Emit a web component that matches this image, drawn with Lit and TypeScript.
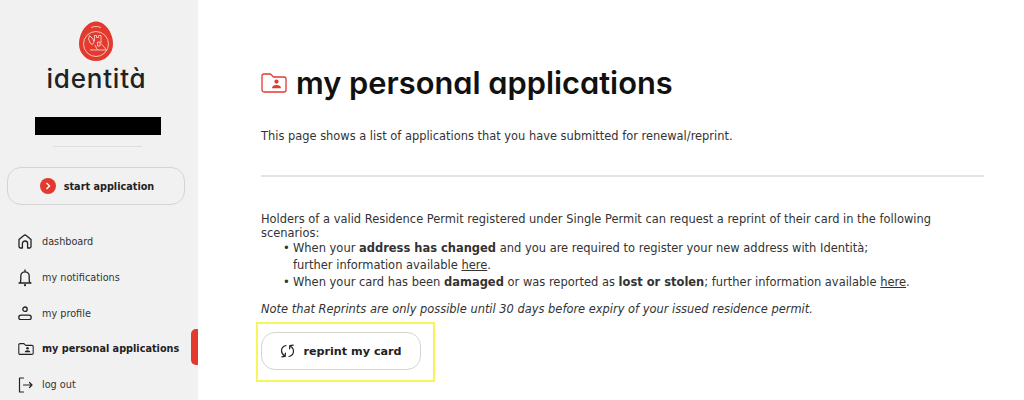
import { LitElement, html, css, svg } from "lit";
import { customElement } from "lit/decorators.js";

const folder = (c: string, w: number, h: number, sw = 1.3) => html`<svg width=${w} height=${h} viewBox="0 0 26 20" fill="none" stroke=${c} stroke-width=${sw} stroke-linejoin="round">
  <path d="M1 3a2 2 0 0 1 2-2h6.500l3 3H23a2 2 0 0 1 2 2V17a2 2 0 0 1-2 2H3a2 2 0 0 1-2-2Z" />
  <circle cx="15.500" cy="8.600" r="2.100" fill=${c} stroke="none" />
  <path d="M11 15.300c0-2 2-3.200 4.500-3.200s4.500 1.200 4.500 3.200Z" fill=${c} stroke="none" />
</svg>`;

const icons: Record<string, unknown> = {
  home: html`<svg width="14" height="15" viewBox="0 0 14 15" fill="none" stroke="#222" stroke-width="1.300" stroke-linejoin="round"><path d="M1 5.600 5.800 1.500a1.800 1.800 0 0 1 2.400 0L13 5.600V12.500a1.500 1.500 0 0 1-1.500 1.500H9.600V9.600a2.600 2.600 0 0 0-5.200 0V14H2.500A1.500 1.500 0 0 1 1 12.500Z"/></svg>`,
  bell: html`<svg width="14" height="18" viewBox="0 0 14 18" fill="none" stroke="#222" stroke-width="1.300" stroke-linecap="round"><path d="M7 1v1.400M1 14h12M2 14c.6-1 .8-2.200.8-3.500V7a4.200 4.200 0 0 1 8.400 0v3.500c0 1.300.2 2.500.8 3.500"/><circle cx="7" cy="16.200" r="1.100" fill="#222" stroke="none"/></svg>`,
  user: html`<svg width="14" height="14" viewBox="0 0 14 14" fill="none" stroke="#222" stroke-width="1.300"><circle cx="7" cy="3.200" r="2.200"/><path d="M3 9.200h8a2.200 2.200 0 0 1 0 4.400H3a2.200 2.200 0 0 1 0-4.400Z"/></svg>`,
  folder: folder("#222", 16, 12, 1.800),
  logout: html`<svg width="15" height="16" viewBox="0 0 15 16" fill="none" stroke="#222" stroke-width="1.200" stroke-linecap="round" stroke-linejoin="round"><path d="M5.500 1H1.500v14h4M5.500 8h8.500M11.500 5.500 14 8l-2.500 2.500"/></svg>`,
};

const nav = [
  { icon: "home", label: "dashboard" },
  { icon: "bell", label: "my notifications" },
  { icon: "user", label: "my profile" },
  { icon: "folder", label: "my personal applications", active: true },
  { icon: "logout", label: "log out" },
];

const mark = svg`
  <path d="M17 .5C25.500.5 34 11 34 23 34 32.500 26.500 40 17 40 7.500 40 0 32.500 0 23 0 11 8.500.5 17 .5Z" fill="#e23a2e"/>
  <g fill="none" stroke="#f8d0ca" stroke-width=".9">
    <circle cx="17" cy="23" r="12.500"/>
    <path d="M12 6.500c3.200-1.300 6.800-1.300 10 0"/>
    <path d="M10.500 14.500l3.500 3.500 1 3-1.500 2.500-2-1-2-4.500ZM15.500 20v-5.500h2v2h2v-2h2.500v8M18.500 25v-4h2.500v4ZM11 29h7.500l-2.500-5M18.500 29h9l-5-6"/>
  </g>`;

@customElement("app-root")
export class AppRoot extends LitElement {
  static styles = css`
    :host {
      display: flex;
      width: 1024px;
      height: 400px;
      overflow: hidden;
      background: #fff;
      font-family: "DejaVu Sans", Verdana, sans-serif;
      color: #222;
    }
    .side {
      width: 198px;
      height: 400px;
      flex: none;
      background: #f1f1f1;
      display: flex;
      flex-direction: column;
      align-items: center;
      padding-top: 21px;
      box-sizing: border-box;
      overflow: hidden;
    }
    .side > * { flex: none; }
    .mark { display: block; margin-left: -6px; }
    .brand {
      font-family: "Inter", sans-serif;
      font-feature-settings: "cv11";
      font-size: 26px;
      font-weight: 500;
      line-height: 28px;
      letter-spacing: 0.8px;
      color: #222;
      margin: 4px 0 0 -5px;
    }
    .redact { width: 126px; height: 18px; background: #000; margin: 24px 0 0 -2px; }
    .rule { width: 89px; height: 1px; background: #dedede; margin: 11px 0 0 -4px; }
    .start {
      width: 178px;
      height: 38px;
      box-sizing: border-box;
      margin: 20px 0 0 -6px;
      border: 1px solid #d4d4d4;
      border-radius: 14px;
      display: flex;
      align-items: center;
      justify-content: center;
      gap: 8px;
      font-size: 9.700px;
      font-weight: 700;
      padding-left: 2px;
    }
    .dot {
      width: 16px; height: 16px; border-radius: 50%; background: #e23a2e;
      display: flex; align-items: center; justify-content: center;
    }
    nav { align-self: stretch; margin-top: 19px; display: flex; flex-direction: column; }
    .item {
      height: 35.700px;
      flex: none;
      display: flex;
      align-items: center;
      padding-left: 18px;
      font-size: 9.700px;
      color: #333;
      position: relative;
    }
    .ic { width: 24px; flex: none; display: flex; align-items: center; }
    .active { font-weight: 700; color: #222; }
    .tab {
      position: absolute; right: 0; top: -2px; width: 7px; height: 36px;
      background: #e23a2e; border-radius: 5px 0 0 5px;
    }
    main {
      flex: 1;
      padding: 0 40px 0 63px;
      min-width: 0;
    }
    h1 {
      margin: 65px 0 0 0;
      display: flex;
      align-items: center;
      gap: 9px;
      font-family: "Inter", sans-serif;
      font-feature-settings: "cv11";
      font-weight: 600;
      font-size: 30.800px;
      line-height: 36px;
      color: #111;
    }
    p, ul { margin: 0; font-size: 11.430px; line-height: 16px; color: #333; }
    .lead { margin-top: 27px; }
    hr { border: 0; height: 2px; background: #e3e3e3; margin: 31px 0 0 0; }
    .holders { margin-top: 35px; line-height: 14px; font-size: 11.450px; }
    ul { list-style: none; padding: 0 0 0 32px; font-size: 11.480px; }
    li { line-height: 17px; position: relative; }
    li::before { content: "•"; position: absolute; left: -10px; }
    a { color: inherit; text-decoration: underline; }
    b { font-weight: 700; }
    .note { margin-top: 10px; font-style: italic; }
    .hl {
      margin: 5px 0 0 -5px;
      width: 179px;
      height: 60px;
      box-sizing: border-box;
      border: 2px solid #f6f65a;
      padding: 8px 0 0 3px;
    }
    .reprint {
      width: 160px;
      height: 38px;
      box-sizing: border-box;
      border: 1px solid #d4d4d4;
      border-radius: 14px;
      display: flex;
      align-items: center;
      justify-content: center;
      gap: 8px;
      font-size: 11.200px;
      font-weight: 700;
    }
    .reprint svg { stroke: #222; }
  `;

  render() {
    return html`
      <aside class="side">
        <svg class="mark" width="34" height="40" viewBox="0 0 34 40">${mark}</svg>
        <div class="brand">identità</div>
        <div class="redact"></div>
        <div class="rule"></div>
        <div class="start">
          <span class="dot"><svg width="6" height="8" viewBox="0 0 6 8" fill="none" stroke="#fff" stroke-width="1.400"><path d="M1.500 1 4.500 4 1.500 7"/></svg></span>
          start application
        </div>
        <nav>
          ${nav.map(
            (n) => html`<div class="item ${n.active ? "active" : ""}">
              <span class="ic">${icons[n.icon]}</span>${n.label}
              ${n.active ? html`<span class="tab"></span>` : ""}
            </div>`
          )}
        </nav>
      </aside>
      <main>
        <h1>${folder("#e23a2e", 26, 20)}<span>my personal applications</span></h1>
        <p class="lead">This page shows a list of applications that you have submitted for renewal/reprint.</p>
        <hr />
        <p class="holders">Holders of a valid Residence Permit registered under Single Permit can request a reprint of their card in the following scenarios:</p>
        <ul>
          <li>When your <b>address has changed</b> and you are required to register your new address with Identità;<br />further information available <a href="#">here</a>.</li>
          <li>When your card has been <b>damaged</b> or was reported as <b>lost or stolen</b>; further information available <a href="#">here</a>.</li>
        </ul>
        <p class="note">Note that Reprints are only possible until 30 days before expiry of your issued residence permit.</p>
        <div class="hl">
          <div class="reprint">
            <svg width="15" height="14" viewBox="0 0 15 14" fill="none" stroke-width="1.200" stroke-linecap="round" stroke-linejoin="round"><path d="M6 1.500C3.200 2.200 1.500 4.300 1.500 6.800c0 2.200 1.300 4 3.500 5.500M1.800 12.800l3.400-.4.200-3.200"/><path d="M9 12.500c2.800-.7 4.500-2.800 4.500-5.300 0-2.200-1.300-4-3.500-5.500M13.200 1.200l-3.400.4-.2 3.200"/></svg>
            reprint my card
          </div>
        </div>
      </main>
    `;
  }
}
